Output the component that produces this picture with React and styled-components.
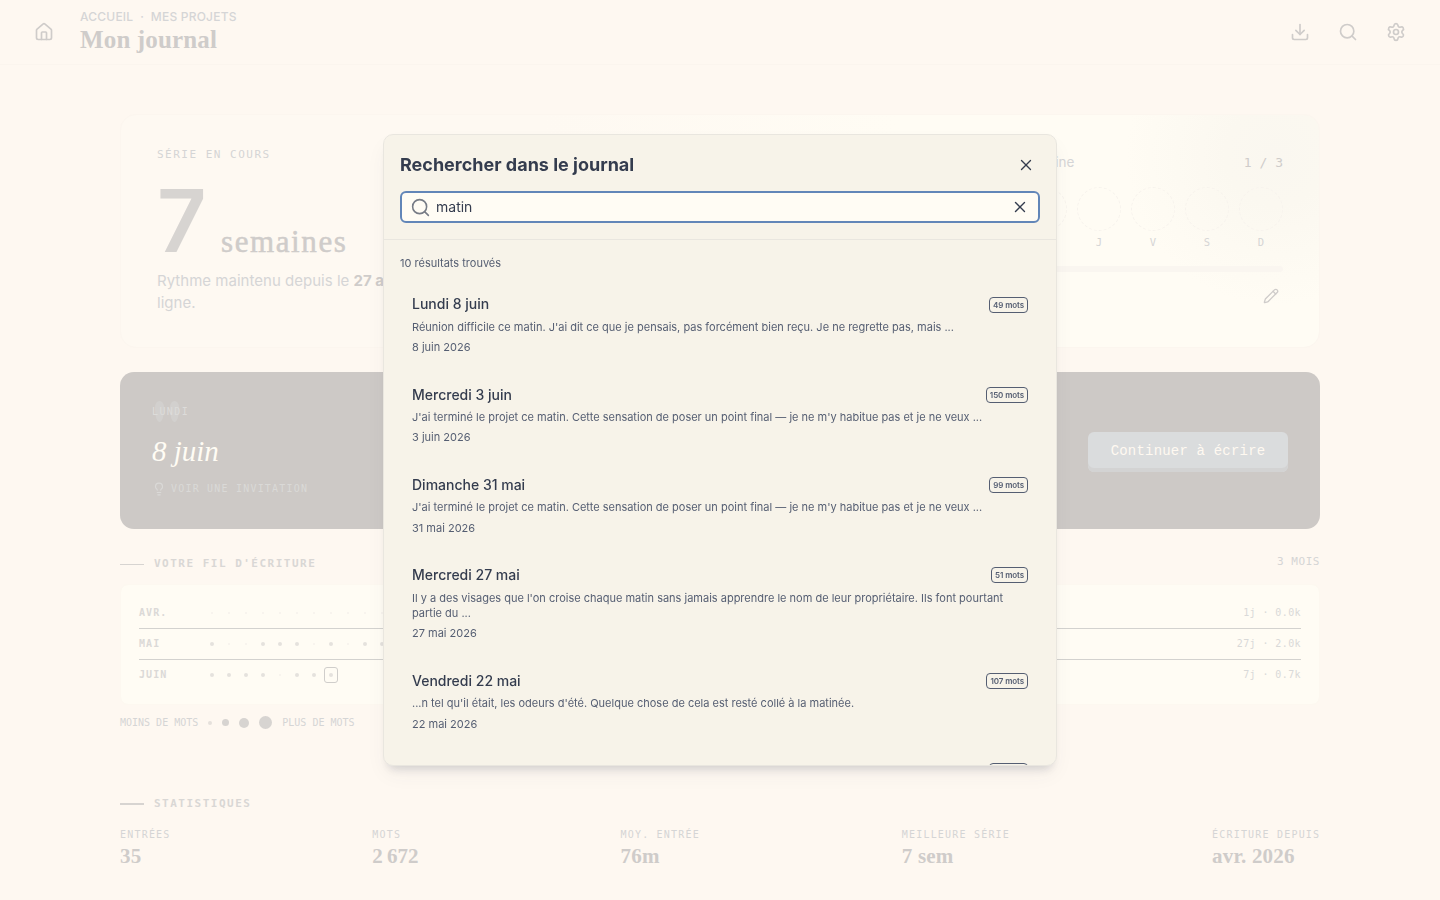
import React from 'react'
import styled, { createGlobalStyle } from 'styled-components'
import { House, Download, Search, Settings, Pencil, Lightbulb, X } from 'lucide-react'

const sans = `Inter, 'Liberation Sans', sans-serif`
const serif = `'Liberation Serif', serif`
const mono = `'DejaVu Sans Mono', 'Liberation Mono', monospace`

const days = ['L', 'M', 'M', 'J', 'V', 'S', 'D']

const months = [
  { name: 'AVR.', length: 30, written: [27], total: '1j · 0.0k' },
  { name: 'MAI', length: 31, written: [1, 4, 5, 6, 8, 10, 11, 12, 13, 14, 15, 16, 17, 18, 19, 20, 21, 22, 23, 24, 25, 26, 27, 28, 29, 30, 31], total: '27j · 2.0k' },
  { name: 'JUIN', length: 8, written: [1, 2, 3, 4, 6, 7, 8], today: 8, total: '7j · 0.7k' },
]

const stats = [
  { label: 'ENTRÉES', value: '35', width: 50 },
  { label: 'MOTS', value: '2\u202f672', width: 46 },
  { label: 'MOY. ENTRÉE', value: '76m', width: 79 },
  { label: 'MEILLEURE SÉRIE', value: '7 sem', width: 108 },
  { label: 'ÉCRITURE DEPUIS', value: 'avr. 2026', width: 108 },
]

const results = [
  { title: 'Lundi 8 juin', words: 49, date: '8 juin 2026', text: "Réunion difficile ce matin. J'ai dit ce que je pensais, pas forcément bien reçu. Je ne regrette pas, mais ..." },
  { title: 'Mercredi 3 juin', words: 150, date: '3 juin 2026', text: "J'ai terminé le projet ce matin. Cette sensation de poser un point final — je ne m'y habitue pas et je ne veux ..." },
  { title: 'Dimanche 31 mai', words: 99, date: '31 mai 2026', text: "J'ai terminé le projet ce matin. Cette sensation de poser un point final — je ne m'y habitue pas et je ne veux ..." },
  { title: 'Mercredi 27 mai', words: 51, date: '27 mai 2026', text: "Il y a des visages que l'on croise chaque matin sans jamais apprendre le nom de leur propriétaire. Ils font pourtant partie du ..." },
  { title: 'Vendredi 22 mai', words: 107, date: '22 mai 2026', text: "...n tel qu'il était, les odeurs d'été. Quelque chose de cela est resté collé à la matinée." },
  { title: 'Mardi 19 mai', words: 84, date: '19 mai 2026', text: 'Café seul ce matin, avant que la maison ne se réveille.' },
]

function Dashboard() {
  return (
    <>
      <TopBar>
        <House size={20} strokeWidth={2} />
        <Heading>
          <Crumbs>ACCUEIL&nbsp; ·&nbsp; MES PROJETS</Crumbs>
          <PageTitle>Mon journal</PageTitle>
        </Heading>
        <Actions>
          <Download size={20} strokeWidth={2} />
          <Search size={20} strokeWidth={2} />
          <Settings size={20} strokeWidth={2} />
        </Actions>
      </TopBar>

      <Main>
        <Hero>
          <Streak>
            <MonoLabel $size={11} $track={1.5}>SÉRIE EN COURS</MonoLabel>
            <StreakCount>
              <BigNumber>7</BigNumber>
              <Unit>semaines</Unit>
            </StreakCount>
            <StreakText>
              Rythme maintenu depuis le <b>27 avril</b>, semaine après<br />ligne.
            </StreakText>
          </Streak>
          <Week>
            <WeekHead>
              <span>Cette semaine</span>
              <WeekCount>1 / 3</WeekCount>
            </WeekHead>
            <DayRow>
              {days.map((day, i) => (
                <Day key={i}>
                  <DayCircle />
                  <MonoLabel $size={10.5} $track={0}>{day}</MonoLabel>
                </Day>
              ))}
            </DayRow>
            <Progress />
            <EditRow><Pencil size={16} strokeWidth={2} /></EditRow>
          </Week>
        </Hero>

        <Today>
          <TodayInfo>
            <QuoteMark />
            <Weekday>LUNDI</Weekday>
            <TodayDate>8 juin</TodayDate>
            <Invitation>
              <Lightbulb size={14} strokeWidth={2} />
              <span>VOIR UNE INVITATION</span>
            </Invitation>
          </TodayInfo>
          <WriteButton>Continuer à écrire</WriteButton>
        </Today>

        <SectionHead $height={55}>
          <Dash $thick={1} />
          <SectionTitle>VOTRE FIL D'ÉCRITURE</SectionTitle>
          <Period>3 MOIS</Period>
        </SectionHead>

        <Thread>
          {months.map((month) => (
            <Month key={month.name}>
              <MonthName>{month.name}</MonthName>
              <Dots>
                {Array.from({ length: month.length }, (_, i) => i + 1).map((n) => (
                  <DotCell key={n} $today={month.today === n}>
                    <Dot $filled={month.written.includes(n)} />
                  </DotCell>
                ))}
              </Dots>
              <MonthTotal>{month.total}</MonthTotal>
            </Month>
          ))}
        </Thread>

        <Legend>
          <span>MOINS DE MOTS</span>
          <Scale>
            <ScaleDot $size={4} $light />
            <ScaleDot $size={7} />
            <ScaleDot $size={10} />
            <ScaleDot $size={13} />
          </Scale>
          <span>PLUS DE MOTS</span>
        </Legend>

        <SectionHead $height={20} $top={53}>
          <Dash $thick={2} />
          <SectionTitle>STATISTIQUES</SectionTitle>
        </SectionHead>
        <Stats>
          {stats.map((stat) => (
            <Stat key={stat.label} $width={stat.width}>
              <MonoLabel $size={10} $track={1.2}>{stat.label}</MonoLabel>
              <StatValue>{stat.value}</StatValue>
            </Stat>
          ))}
        </Stats>
      </Main>
    </>
  )
}

function SearchDialog() {
  return (
    <Overlay>
      <Dialog>
        <DialogHeader>
          <TitleRow>
            <DialogTitle>Rechercher dans le journal</DialogTitle>
            <IconButton><X size={18} strokeWidth={1.8} /></IconButton>
          </TitleRow>
          <Field>
            <Search size={21} strokeWidth={1.8} color="#777c86" />
            <Query>matin</Query>
            <ClearButton><X size={18} strokeWidth={1.8} /></ClearButton>
          </Field>
        </DialogHeader>
        <DialogBody>
          <ResultCount>10 résultats trouvés</ResultCount>
          {results.map((result) => (
            <Result key={result.title}>
              <ResultHead>
                <ResultTitle>{result.title}</ResultTitle>
                <Badge>{result.words} mots</Badge>
              </ResultHead>
              <Excerpt>{result.text}</Excerpt>
              <ResultDate>{result.date}</ResultDate>
            </Result>
          ))}
        </DialogBody>
      </Dialog>
    </Overlay>
  )
}

function App() {
  return (
    <Page>
      <GlobalStyle />
      <Dashboard />
      <SearchDialog />
    </Page>
  )
}

const GlobalStyle = createGlobalStyle`
  * { box-sizing: border-box; }
  body { margin: 0; background: #fef8f1; overflow: hidden; }
  h1, h2, h3, p { margin: 0; }
  svg { flex-shrink: 0; }
`

const Page = styled.div`
  height: 900px;
  overflow: hidden;
  background: #fef8f1;
  color: #cfccca;
  font-family: ${sans};
`

const TopBar = styled.header`
  display: flex;
  align-items: center;
  height: 65px;
  padding: 0 34px;
  border-bottom: 1px solid #fbf5ee;
`

const Heading = styled.div`
  margin: -2px 0 0 26px;
  flex: 1;
`

const Crumbs = styled.div`
  font-size: 12px;
  line-height: 16px;
  letter-spacing: 0.21px;
  color: #d5d5d6;
  font-weight: 500;
  white-space: nowrap;
`

const PageTitle = styled.h1`
  font: 700 25px/29px ${serif};
  letter-spacing: 0.15px;
`

const Actions = styled.div`
  display: flex;
  gap: 28px;
`

const Main = styled.main`
  width: 1200px;
  margin: 49px auto 0;
`

const Hero = styled.section`
  display: flex;
  justify-content: space-between;
  height: 234px;
  border: 1px solid #fcf6ef;
  border-radius: 16px;
  overflow: hidden;
  background: radial-gradient(circle at 1155px 40px, #faf7f0 0, #fbf8f0 50px, rgba(255, 252, 244, 0) 150px),
    linear-gradient(90deg, #fef9f2 35%, #fffcf4 65%);
`

const Streak = styled.div`
  padding: 30px 0 0 36px;
  width: 500px;
`

const MonoLabel = styled.div`
  font-family: ${mono};
  font-size: ${(p) => p.$size}px;
  line-height: 20px;
  letter-spacing: ${(p) => p.$track}px;
  color: #d5d5d5;
  white-space: nowrap;
`

const StreakCount = styled.div`
  display: flex;
  align-items: baseline;
  height: 101px;
  margin-top: 4px;
`

const BigNumber = styled.span`
  font: 600 86px/105px ${sans};
  width: 64px;
  color: #d7d4d1;
`

const Unit = styled.span`
  font: 400 31px/40px ${serif};
  letter-spacing: 1.6px;
  -webkit-text-stroke: 0.5px #cfccca;
`

const StreakText = styled.p`
  font-size: 15px;
  line-height: 22px;
  color: #d5d5d6;
  white-space: nowrap;
  letter-spacing: 0.02px;
  b { color: #cfccca; }
`

const Week = styled.div`
  width: 368px;
  margin-right: 36px;
  padding-top: 36px;
`

const WeekHead = styled.div`
  display: flex;
  justify-content: space-between;
  align-items: center;
  height: 22px;
  font-size: 13.5px;
  color: #d5d5d6;
  padding-left: 68px;
`

const WeekCount = styled.span`
  font-family: ${mono};
  font-size: 13px;
  color: #cfccca;
`

const DayRow = styled.div`
  display: flex;
  justify-content: space-between;
  margin-top: 14px;
`

const Day = styled.div`
  width: 44px;
  text-align: center;
`

const DayCircle = styled.div`
  height: 44px;
  margin-bottom: 1px;
  border: 1px dashed #f7f3ed;
  border-radius: 50%;
`

const Progress = styled.div`
  height: 6px;
  margin-top: 14px;
  border-radius: 3px;
  background: #faf6f0;
`

const EditRow = styled.div`
  display: flex;
  justify-content: flex-end;
  padding: 16px 4px 0;
`

const Today = styled.section`
  display: flex;
  align-items: center;
  justify-content: space-between;
  height: 157px;
  margin-top: 24px;
  padding: 0 32px;
  border-radius: 14px;
  background: #cdc9c6;
`

const TodayInfo = styled.div`
  position: relative;
`

const QuoteMark = styled.span`
  position: absolute;
  left: 3px;
  top: -3px;
  display: flex;
  gap: 6px;
  &::before, &::after {
    content: '';
    width: 9px;
    height: 21px;
    border-radius: 5px 5px 5px 5px / 7px 7px 14px 14px;
    background: #d2d0ce;
  }
`

const Weekday = styled.div`
  position: relative;
  font: 10px/16px ${mono};
  letter-spacing: 1.4px;
  color: #dddcda;
`

const TodayDate = styled.div`
  margin: 11px 0 10px;
  font: italic 400 29px/40px ${serif};
  color: #fffcf4;
`

const Invitation = styled.div`
  display: flex;
  align-items: center;
  gap: 5px;
  font: 10px/16px ${mono};
  letter-spacing: 1.2px;
  color: #dad9d7;
`

const WriteButton = styled.button`
  width: 200px;
  height: 40px;
  margin-top: 2px;
  padding: 0 0 2px;
  border: 0;
  border-radius: 6px;
  background: #dadcdd;
  box-shadow: inset 0 -4px 0 #d3d3d3;
  font: 14px 'Liberation Mono', monospace;
  letter-spacing: 0.19px;
  color: #fff9f1;
`

const SectionHead = styled.div`
  display: flex;
  align-items: center;
  height: ${(p) => p.$height}px;
  margin-top: ${(p) => p.$top || 0}px;
  padding-top: ${(p) => (p.$top ? 0 : 15)}px;
`

const Dash = styled.div`
  width: 24px;
  height: ${(p) => p.$thick}px;
  margin-right: 10px;
  background: #d7d4d1;
`

const SectionTitle = styled.h2`
  font: 700 11px/20px ${mono};
  letter-spacing: 1.49px;
  color: #d9d7d5;
`

const Period = styled.span`
  margin: -5px 0 0 auto;
  font: 11px/20px ${mono};
  letter-spacing: 0.55px;
  color: #d5d5d5;
`

const Thread = styled.section`
  height: 121px;
  padding: 12px 18px;
  border: 1px solid #fdf8f0;
  border-radius: 8px;
  background: #fffcf4;
`

const Month = styled.div`
  display: flex;
  align-items: center;
  height: 31px;
  font: 10px/30px ${mono};
  & + & { border-top: 1px solid #d3d2cf; }
`

const MonthName = styled.div`
  width: 64px;
  font-weight: 700;
  letter-spacing: 1.1px;
  color: #dbd9d7;
`

const Dots = styled.div`
  display: flex;
  flex: 1;
`

const DotCell = styled.div`
  display: grid;
  place-items: center;
  width: 14px;
  height: 16px;
  margin: 0 1px 0 2px;
  border-radius: 3px;
  border: 1px solid ${(p) => (p.$today ? '#d0cecb' : 'transparent')};
`

const Dot = styled.div`
  width: ${(p) => (p.$filled ? 4 : 2)}px;
  height: ${(p) => (p.$filled ? 4 : 2)}px;
  border-radius: 50%;
  background: ${(p) => (p.$filled ? '#e5e2dd' : '#f6f2ec')};
`

const MonthTotal = styled.div`
  letter-spacing: 0.4px;
  color: #d9d9d8;
`

const Legend = styled.div`
  display: flex;
  align-items: center;
  gap: 10px;
  height: 36px;
  padding-bottom: 1px;
  font: 10px/20px ${mono};
  color: #d5d5d5;
`

const Scale = styled.div`
  display: flex;
  align-items: center;
  gap: 10px;
`

const ScaleDot = styled.div`
  width: ${(p) => p.$size}px;
  height: ${(p) => p.$size}px;
  border-radius: 50%;
  background: ${(p) => (p.$light ? '#e5e1dc' : '#d7d4d1')};
`

const Stats = styled.div`
  display: flex;
  justify-content: space-between;
  padding-top: 11px;
`

const Stat = styled.div`
  width: ${(p) => p.$width}px;
`

const StatValue = styled.div`
  font: 700 21px/23px ${serif};
  letter-spacing: 0.2px;
  white-space: nowrap;
`

const Overlay = styled.div`
  position: fixed;
  inset: 0;
  display: flex;
  align-items: center;
  justify-content: center;
`

const Dialog = styled.div`
  width: 674px;
  height: 632px;
  display: flex;
  flex-direction: column;
  overflow: hidden;
  border: 1px solid #e9e6df;
  border-radius: 10px;
  background: #f7f3e9;
  color: #343c4e;
  box-shadow: 0 8px 10px -6px rgba(60, 70, 90, 0.22), 0 10px 22px -3px rgba(60, 70, 90, 0.06);
`

const DialogHeader = styled.div`
  height: 105px;
  padding: 16px;
  border-bottom: 1px solid #e9e6df;
`

const TitleRow = styled.div`
  display: flex;
  align-items: center;
  justify-content: space-between;
  height: 28px;
  margin-bottom: 12px;
`

const DialogTitle = styled.h2`
  padding-bottom: 2px;
  font-size: 18px;
  font-weight: 700;
`

const IconButton = styled.button`
  display: grid;
  place-items: center;
  width: 28px;
  height: 28px;
  padding: 0;
  border: 0;
  background: none;
  color: inherit;
`

const ClearButton = styled(IconButton)`
  width: 20px;
  height: 20px;
`

const Field = styled.div`
  display: flex;
  align-items: center;
  height: 32px;
  padding: 0 8px;
  border: 2px solid #6286b8;
  border-radius: 6px;
  background: #fffcf4;
`

const Query = styled.span`
  flex: 1;
  margin-left: 5px;
  padding-bottom: 2px;
  font-size: 14px;
`

const DialogBody = styled.div`
  flex: 1;
  padding: 16px;
  overflow: hidden;
`

const ResultCount = styled.p`
  margin-bottom: 9.15px;
  font-size: 11px;
  line-height: 15.4px;
  color: #555e72;
`

const Result = styled.div`
  padding: 12px;
  margin-bottom: 3.3px;
`

const ResultHead = styled.div`
  display: flex;
  align-items: center;
  justify-content: space-between;
  height: 24px;
`

const ResultTitle = styled.h3`
  padding-bottom: 1.4px;
  font-size: 14px;
  font-weight: 500;
`

const Badge = styled.span`
  height: 16px;
  padding: 0 3px;
  border: 1px solid #555e72;
  border-radius: 4px;
  font-size: 8px;
  line-height: 14px;
  font-weight: 600;
  letter-spacing: -0.1px;
  color: #555e72;
`

const Excerpt = styled.p`
  margin: 3.3px 0 4.9px;
  font-size: 11px;
  line-height: 15.4px;
  color: #555e72;
`

const ResultDate = styled.div`
  font-size: 11px;
  line-height: 15.4px;
  color: #555e72;
`

export default App
